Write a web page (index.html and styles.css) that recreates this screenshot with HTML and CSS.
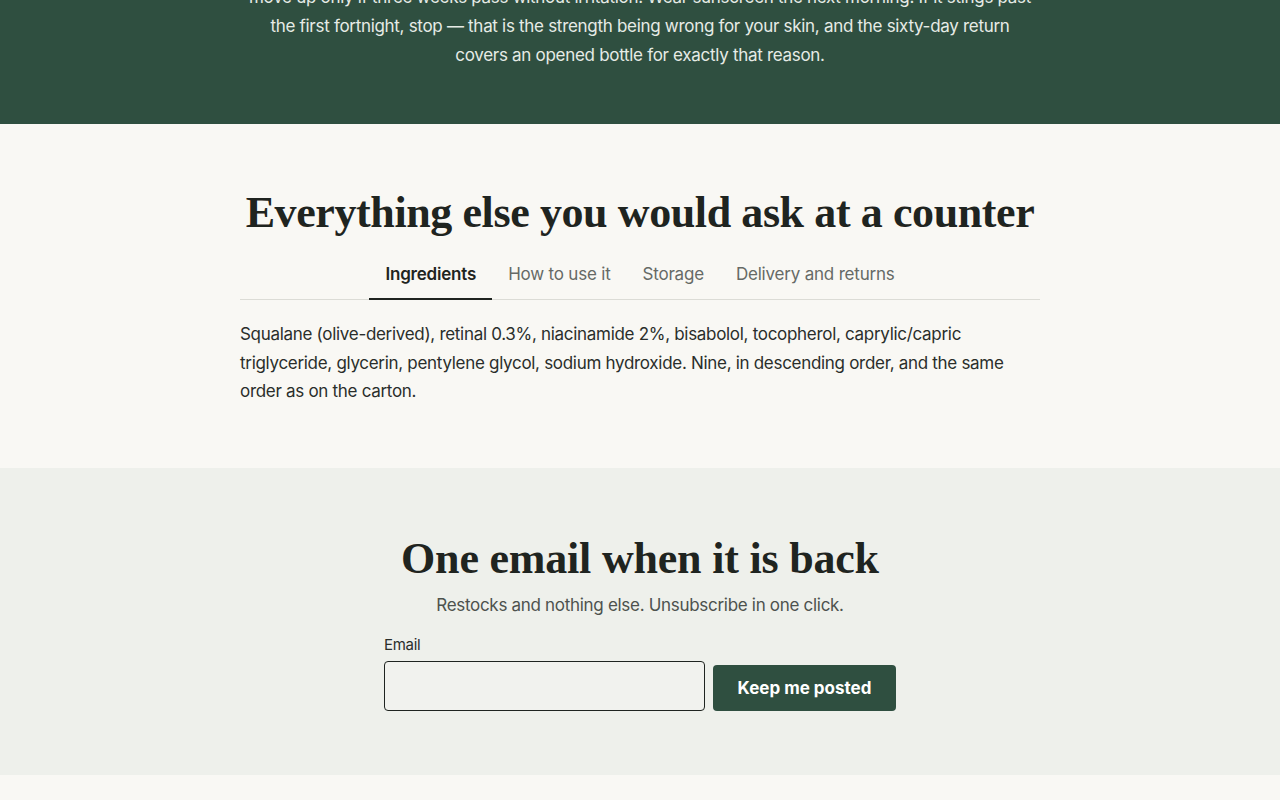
FILE: index.html
```html
<!DOCTYPE html>
<html lang="en">
<head>
<meta charset="utf-8">
<title>Retinal serum</title>
<link rel="stylesheet" href="styles.css">
</head>
<body>
<section class="hero">
  <p class="hero-text">move up only if three weeks pass without irritation. Wear sunscreen the next morning. If it stings past the first fortnight, stop — that is the strength being wrong for your skin, and the sixty-day return covers an opened bottle for exactly that reason.</p>
</section>
<section class="faq">
  <div class="wrap">
    <h2 class="faq-title">Everything else you would ask at a counter</h2>
    <div class="tabs">
      <button class="tab tab-active">Ingredients</button>
      <button class="tab">How to use it</button>
      <button class="tab">Storage</button>
      <button class="tab">Delivery and returns</button>
    </div>
    <p class="panel">Squalane (olive-derived), retinal 0.3%, niacinamide 2%, bisabolol, tocopherol, caprylic/capric triglyceride, glycerin, pentylene glycol, sodium hydroxide. Nine, in descending order, and the same order as on the carton.</p>
  </div>
</section>
<section class="notify">
  <h2 class="notify-title">One email when it is back</h2>
  <p class="notify-sub">Restocks and nothing else. Unsubscribe in one click.</p>
  <form class="notify-form">
    <label class="field">
      <span class="field-label">Email</span>
      <input class="field-input" type="email">
    </label>
    <button class="btn" type="button">Keep me posted</button>
  </form>
</section>
<footer class="foot"></footer>
</body>
</html>
```
FILE: styles.css
```css
* { box-sizing: border-box; }
body {
  margin: 0;
  background: #f9f8f4;
  color: #1f2420;
  font-family: "Inter", "Liberation Sans", sans-serif;
  letter-spacing: -0.3px;
}
.hero {
  background: #2f4f40;
  margin-top: -17px;
  padding: 0 0 54px;
}
.hero-text {
  margin: 0 auto;
  max-width: 790px;
  text-align: center;
  color: #e6ebe6;
  font-size: 17px;
  line-height: 29px;
}
.faq {
  padding: 64px 0 62px;
}
.wrap {
  max-width: 800px;
  margin: 0 auto;
}
.faq-title {
  margin: 0 0 11px;
  text-align: center;
  font-family: "Liberation Serif", serif;
  font-weight: 700;
  font-size: 44px;
  line-height: 50px;
  letter-spacing: -0.4px;
  color: #1f2420;
}
.tabs {
  display: flex;
  justify-content: center;
  border-bottom: 1px solid #dcdcd6;
}
.tab {
  background: none;
  border: 0;
  border-bottom: 2px solid transparent;
  margin-bottom: -1px;
  padding: 12px 16px 11px;
  font: inherit;
  letter-spacing: -0.2px;
  font-size: 17px;
  line-height: 26px;
  color: #666a66;
  cursor: pointer;
}
.tab-active {
  color: #1f2420;
  font-weight: 600;
  border-bottom-color: #1f2420;
}
.panel {
  margin: 20px 0 0;
  font-size: 17px;
  line-height: 28.5px;
  color: #2a2e2b;
}
.notify {
  background: #eef0eb;
  padding: 64px 0;
  text-align: center;
}
.notify-title {
  margin: 0;
  font-family: "Liberation Serif", serif;
  font-weight: 700;
  font-size: 44px;
  line-height: 53px;
  letter-spacing: -0.2px;
}
.notify-sub {
  margin: 6px 0 0;
  font-size: 17px;
  line-height: 28px;
  color: #4d524e;
}
.notify-form {
  display: flex;
  align-items: flex-end;
  gap: 8px;
  width: 512px;
  margin: 16px auto 0;
  text-align: left;
}
.field {
  display: flex;
  flex-direction: column;
  gap: 6px;
  flex: 1;
}
.field-label {
  font-size: 15px;
  line-height: 20px;
  color: #2a2e2b;
}
.field-input {
  height: 50px;
  border: 1px solid #1f2420;
  border-radius: 4px;
  background: #f1f2ee;
  font: inherit;
  padding: 0 12px;
}
.btn {
  height: 46px;
  width: 183px;
  background: #2f4f40;
  color: #ffffff;
  border: 0;
  border-radius: 4px;
  font: inherit;
  font-size: 17px;
  font-weight: 700;
  cursor: pointer;
}
.foot {
  height: 25px;
}
```
